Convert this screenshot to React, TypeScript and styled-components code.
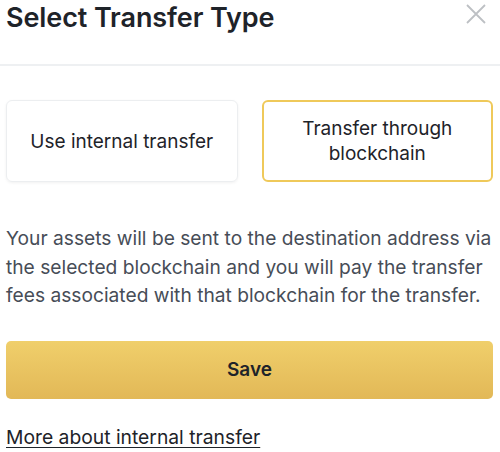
import styled, { createGlobalStyle } from "styled-components";

const GlobalStyle = createGlobalStyle`
  html, body {
    margin: 0;
    padding: 0;
    background: #ffffff;
  }
  body {
    font-family: "Inter", "Liberation Sans", sans-serif;
    color: #1e2329;
  }
`;

export default function App() {
  const options = [
    { label: "Use internal transfer", active: false },
    { label: "Transfer through blockchain", active: true },
  ];

  return (
    <Wrap>
      <GlobalStyle />
      <Header>
        <h1>Select Transfer Type</h1>
        <CloseBtn aria-label="close">
          <svg width="22" height="22" viewBox="0 0 22 22">
            <path d="M2 2 L20 20 M20 2 L2 20" stroke="#bdc0c4" strokeWidth="1.8" />
          </svg>
        </CloseBtn>
      </Header>
      <Main>
        <Options>
          {options.map((o) => (
            <OptionCard key={o.label} $active={o.active}>
              <span>{o.label}</span>
            </OptionCard>
          ))}
        </Options>
        <Desc>
          Your assets will be sent to the destination address via the selected
          blockchain and you will pay the transfer fees associated with that
          blockchain for the transfer.
        </Desc>
        <SaveBtn>Save</SaveBtn>
        <MoreLink href="#">More about internal transfer</MoreLink>
      </Main>
    </Wrap>
  );
}

const Wrap = styled.div`
  width: 500px;
  height: 452px;
  overflow: hidden;
`;

const Header = styled.div`
  display: flex;
  justify-content: space-between;
  align-items: flex-start;
  height: 64px;
  padding: 0 13px 0 6px;
  border-bottom: 2px solid #eef0f2;
  h1 {
    margin: 1px 0 0;
    font-size: 27px;
    font-weight: 600;
    line-height: 34px;
    letter-spacing: -0.1px;
    color: #1e2329;
  }
`;

const CloseBtn = styled.button`
  border: none;
  background: none;
  padding: 0;
  margin-top: 3px;
  cursor: pointer;
`;

const Main = styled.div`
  padding: 34px 7px 0 6px;
`;

const Options = styled.div`
  display: grid;
  grid-template-columns: 1fr 1fr;
  gap: 24px;
`;

const OptionCard = styled.div<{ $active: boolean }>`
  height: 82px;
  box-sizing: border-box;
  display: flex;
  align-items: center;
  justify-content: center;
  text-align: center;
  padding: 0 10px;
  border-radius: 6px;
  border: ${(p) => (p.$active ? "2px solid #efc95a" : "1px solid #eceef0")};
  box-shadow: ${(p) => (p.$active ? "none" : "0 1px 3px rgba(0,0,0,0.06)")};
  font-size: 19px;
  line-height: 25px;
  color: #1e2329;
  span {
    max-width: 200px;
  }
`;

const Desc = styled.p`
  margin: 42px 0 0;
  font-size: 19.2px;
  line-height: 28.5px;
  color: #474d57;
`;

const SaveBtn = styled.button`
  display: block;
  width: 100%;
  height: 58px;
  margin-top: 31px;
  border: none;
  border-radius: 5px;
  background: linear-gradient(180deg, #f0cf6b 0%, #e2b857 100%);
  font-family: inherit;
  font-size: 19px;
  font-weight: 600;
  color: #1e2329;
  cursor: pointer;
`;

const MoreLink = styled.a`
  display: inline-block;
  margin-top: 27px;
  font-size: 19.3px;
  line-height: 22px;
  color: #1e2329;
  text-decoration: underline;
  text-underline-offset: 3px;
`;
